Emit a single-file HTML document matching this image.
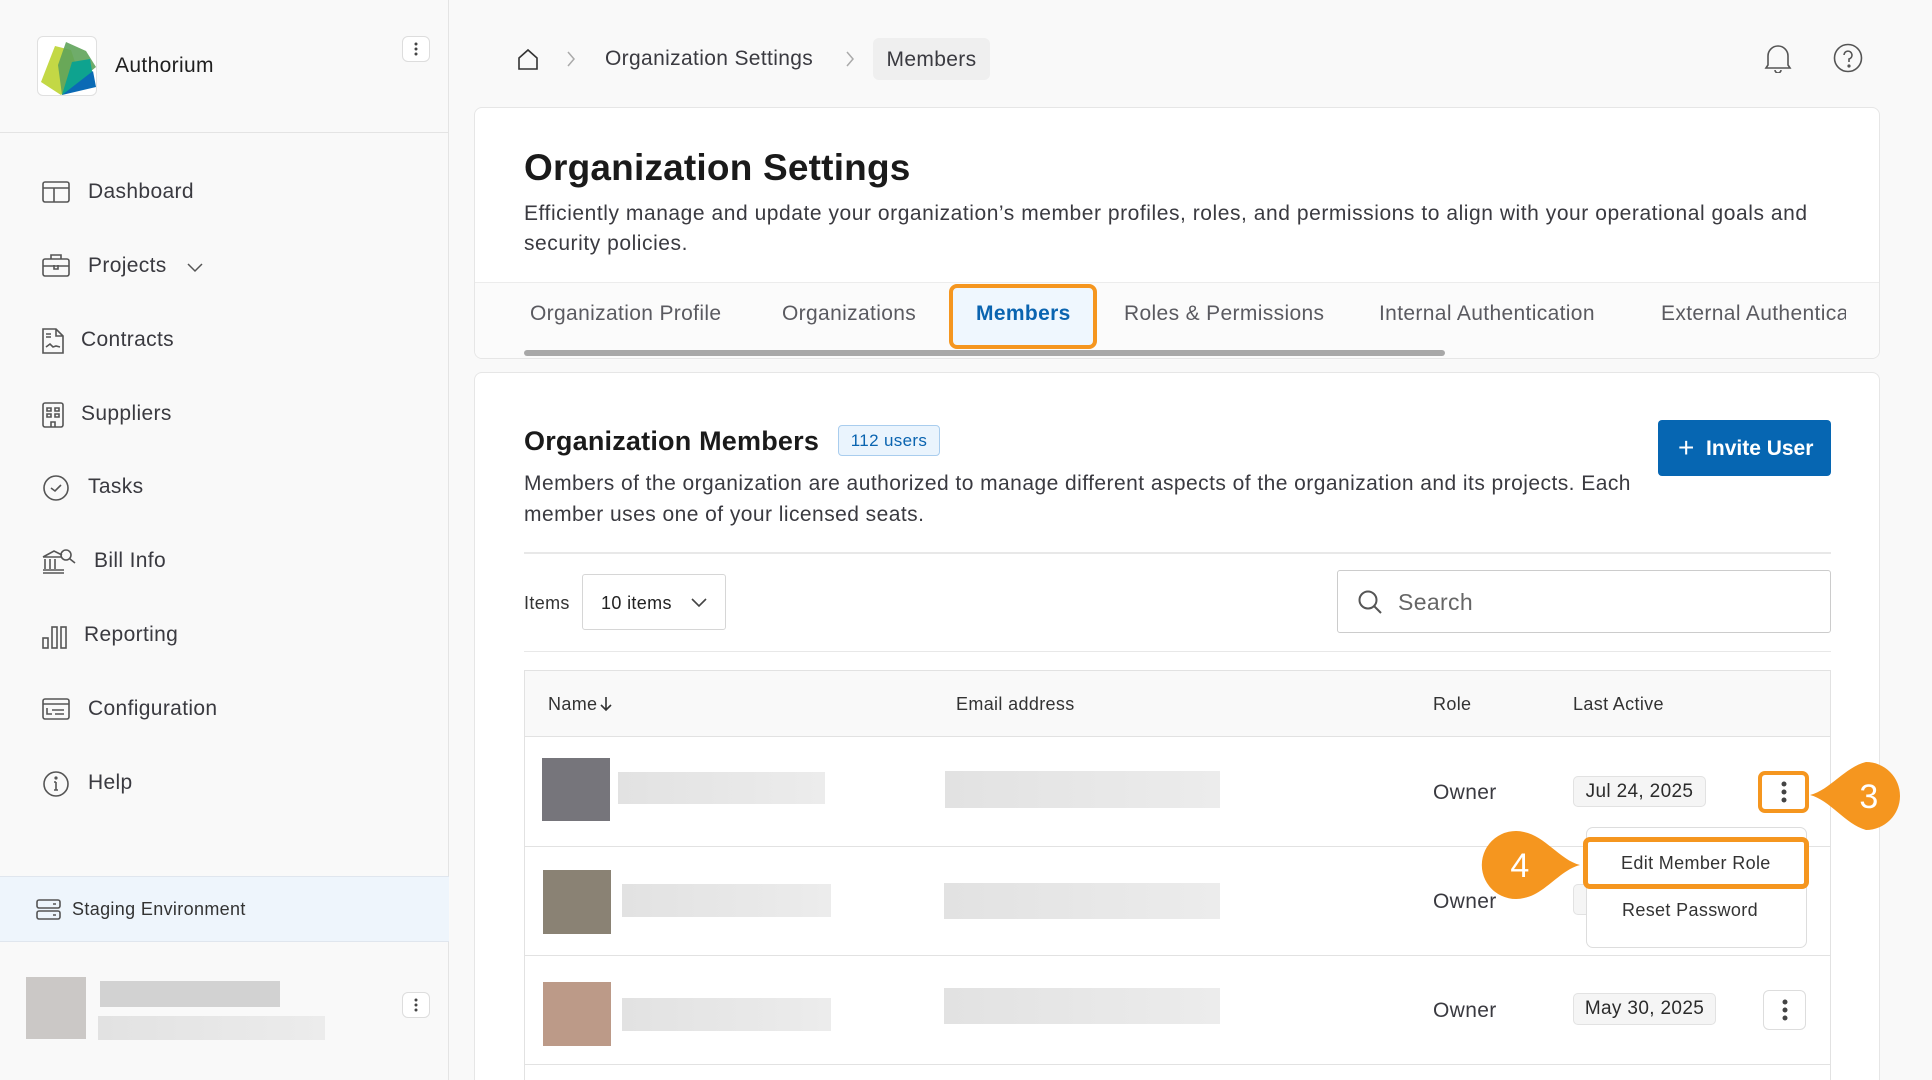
<!DOCTYPE html>
<html><head><meta charset="utf-8"><style>
*{box-sizing:border-box;margin:0;padding:0}
html{width:1932px;height:1080px;overflow:hidden}
body{width:1932px;height:1080px;overflow:hidden;background:#f9f9f9;font-family:"Liberation Sans",sans-serif;color:#2b2b2b;position:relative;letter-spacing:0.35px}
.abs{position:absolute}
.side{left:0;top:0;width:449px;height:1080px;background:#f9f9f9;border-right:1px solid #e4e4e4}
.nav{position:absolute;left:0;display:flex;align-items:center;font-size:21px;color:#3a3a40;height:40px;margin-top:-18px}
.nav svg{position:absolute;left:42px;top:8px}
.card{background:#fff;border:1px solid #e6e6e6;border-radius:8px}
.tab{position:absolute;top:302px;font-size:21px;color:#5a5a60}
.sk{position:absolute;background:linear-gradient(90deg,#e2e2e2,#ececec)}
.kb{position:absolute;border:1px solid #ddd;border-radius:6px;background:#fff}
.dots{position:absolute;left:50%;top:50%;transform:translate(-50%,-50%);width:5px}
.dots i{display:block;width:5px;height:5px;border-radius:50%;background:#444;margin:3px 0}
.pill{position:absolute;background:#f5f5f5;border:1px solid #e2e2e2;border-radius:5px;font-size:19px;color:#2b2b2b;display:flex;align-items:center;justify-content:center}
.owner{position:absolute;left:1433px;font-size:21px;color:#3a3a40}
</style></head><body>
<div class="abs side">
 <div class="abs" style="left:37px;top:36px;width:60px;height:60px;border:1px solid #e0e0e0;border-radius:6px;background:#fff;overflow:hidden">
  <svg width="60" height="60" viewBox="0 0 60 60"><path d="M17 9 L33 13 L42 40 L23 58 L3 45 Z" fill="#c3d845"/><path d="M28 5 L48 14 L58 30 L40 45 L24 58 L20 28 Z" fill="#5fa35a" opacity=".9"/><path d="M34 25 L52 22 L55 40 L24 58 Z" fill="#0ea38f"/><path d="M55 34 L58 50 L24 58 Z" fill="#0a6ab5"/></svg>
 </div>
 <div class="abs" style="left:115px;top:54px;font-size:21px;color:#1f1f1f">Authorium</div>
 <div class="kb" style="left:402px;top:36px;width:28px;height:26px"><div class="dots" style="width:3px"><i style="width:3px;height:3px;margin:2px 0"></i><i style="width:3px;height:3px;margin:2px 0"></i><i style="width:3px;height:3px;margin:2px 0"></i></div></div>
 <div class="abs" style="left:0;top:132px;width:449px;border-top:1px solid #e4e4e4"></div>
 <div class="nav" style="top:190px"><svg width="28" height="24" viewBox="0 0 28 24" fill="none" stroke="#555" stroke-width="1.6"><rect x="1" y="2" width="26" height="20" rx="2"/><path d="M1 8H27M12 8V22"/></svg><span style="margin-left:88px">Dashboard</span></div>
 <div class="nav" style="top:264px"><svg width="28" height="24" viewBox="0 0 28 24" fill="none" stroke="#555" stroke-width="1.6"><rect x="1" y="5" width="26" height="17" rx="2"/><path d="M9 5V1H19V5M1 12H27M12 11v4h4v-4"/></svg><span style="margin-left:88px">Projects</span><svg style="position:static;margin-left:20px;margin-top:4px" width="16" height="10" viewBox="0 0 16 10" fill="none" stroke="#555" stroke-width="1.5"><path d="M1 1l7 7 7-7"/></svg></div>
 <div class="nav" style="top:338px"><svg width="22" height="26" viewBox="0 0 22 26" fill="none" stroke="#555" stroke-width="1.6"><path d="M1 1H14L21 8V25H1Z M14 1V8H21 M4 6H9 M4 9H9 M4 19 L8 16 L11 19 L14 18 L18 19"/></svg><span style="margin-left:81px">Contracts</span></div>
 <div class="nav" style="top:412px"><svg width="22" height="26" viewBox="0 0 22 26" fill="none" stroke="#555" stroke-width="1.6"><rect x="1" y="1" width="20" height="24" rx="2"/><path d="M5 6h4v3H5zM13 6h4v3h-4zM5 12h4v3H5zM13 12h4v3h-4zM9 25v-5h4v5"/></svg><span style="margin-left:81px">Suppliers</span></div>
 <div class="nav" style="top:485px"><svg width="28" height="26" viewBox="0 0 28 26" fill="none" stroke="#555" stroke-width="1.6"><circle cx="14" cy="13" r="12"/><path d="M9 13l4 3 6-6"/></svg><span style="margin-left:88px">Tasks</span></div>
 <div class="nav" style="top:559px"><svg width="34" height="26" viewBox="0 0 34 26" fill="none" stroke="#555" stroke-width="1.6"><path d="M1 8L12 2L20 6M1 8H20M3 10v10M8 10v10M13 10v10M1 21H22M1 24H22"/><circle cx="24" cy="6" r="5"/><path d="M28 10l5 4"/></svg><span style="margin-left:94px">Bill Info</span></div>
 <div class="nav" style="top:633px"><svg width="26" height="26" viewBox="0 0 26 26" fill="none" stroke="#555" stroke-width="1.6"><rect x="1" y="15" width="5" height="10"/><rect x="10" y="4" width="5" height="21"/><rect x="19" y="4" width="5" height="21"/></svg><span style="margin-left:84px">Reporting</span></div>
 <div class="nav" style="top:707px"><svg width="28" height="24" viewBox="0 0 28 24" fill="none" stroke="#555" stroke-width="1.6"><rect x="1" y="2" width="26" height="20" rx="2"/><path d="M1 7H27M5 11v6h5M10 13h12M13 17h9"/></svg><span style="margin-left:88px">Configuration</span></div>
 <div class="nav" style="top:781px"><svg width="28" height="26" viewBox="0 0 28 26" fill="none" stroke="#555" stroke-width="1.6"><circle cx="14" cy="13" r="12"/><path d="M14 11v8M12 19h4M12 11h2"/><circle cx="14" cy="7" r=".8" fill="#555"/></svg><span style="margin-left:88px">Help</span></div>
 <div class="abs" style="left:0;top:876px;width:449px;height:66px;background:#eef5fc;border-top:1px solid #e0e6ee;border-bottom:1px solid #e0e6ee">
  <svg class="abs" style="left:36px;top:22px" width="25" height="22" viewBox="0 0 25 22" fill="none" stroke="#555" stroke-width="1.6"><rect x="1" y="1" width="23" height="8" rx="2"/><rect x="1" y="12" width="23" height="8" rx="2"/><path d="M17 5h3M17 16h3"/></svg>
  <div class="abs" style="left:72px;top:22px;font-size:18px;color:#333">Staging Environment</div>
 </div>
 <div class="abs" style="left:26px;top:977px;width:60px;height:62px;background:#cbc8c6"></div>
 <div class="sk" style="left:100px;top:981px;width:180px;height:26px;background:#d2d2d2"></div>
 <div class="sk" style="left:98px;top:1016px;width:227px;height:24px"></div>
 <div class="kb" style="left:402px;top:992px;width:28px;height:26px"><div class="dots" style="width:3px"><i style="width:3px;height:3px;margin:2px 0"></i><i style="width:3px;height:3px;margin:2px 0"></i><i style="width:3px;height:3px;margin:2px 0"></i></div></div>
</div>

<svg class="abs" style="left:516px;top:47px" width="24" height="24" viewBox="0 0 24 24" fill="none" stroke="#333" stroke-width="1.6"><path d="M3 11L12 3L21 11V22H3Z"/></svg>
<svg class="abs" style="left:566px;top:51px" width="10" height="16" viewBox="0 0 10 16" fill="none" stroke="#aaa" stroke-width="1.5"><path d="M2 1l6 7-6 7"/></svg>
<div class="abs" style="left:605px;top:47px;font-size:21px;color:#3a3a40">Organization Settings</div>
<svg class="abs" style="left:845px;top:51px" width="10" height="16" viewBox="0 0 10 16" fill="none" stroke="#aaa" stroke-width="1.5"><path d="M2 1l6 7-6 7"/></svg>
<div class="abs" style="left:873px;top:38px;width:117px;height:42px;background:#efefef;border-radius:6px;font-size:21px;color:#3a3a40;text-align:center;line-height:44px">Members</div>
<svg class="abs" style="left:1764px;top:43px" width="28" height="30" viewBox="0 0 28 30" fill="none" stroke="#555" stroke-width="1.6"><path d="M4 22V13a10 10 0 0 1 20 0v9l2 3H2Z M11 27a3 3 0 0 0 6 0"/></svg>
<svg class="abs" style="left:1833px;top:43px" width="30" height="30" viewBox="0 0 30 30" fill="none" stroke="#555" stroke-width="1.6"><circle cx="15" cy="15" r="13.5"/><path d="M11 12a4 4 0 1 1 5 4v3"/><circle cx="16" cy="23" r=".8" fill="#555"/></svg>

<div class="abs card" style="left:474px;top:107px;width:1406px;height:252px;overflow:hidden">
 <div class="abs" style="left:49px;top:39px;font-size:37px;font-weight:bold;color:#1a1a1a;letter-spacing:0.2px">Organization Settings</div>
 <div class="abs" style="left:49px;top:91px;width:1320px;font-size:21px;line-height:30px;color:#3a3a40;letter-spacing:0.55px">Efficiently manage and update your organization’s member profiles, roles, and permissions to align with your operational goals and security policies.</div>
 <div class="abs" style="left:0;top:174px;width:1406px;height:80px;background:#fbfbfb;border-top:1px solid #ececec"></div>
</div>
<div class="tab" style="left:530px">Organization Profile</div>
<div class="tab" style="left:782px">Organizations</div>
<div class="abs" style="left:949px;top:284px;width:148px;height:65px;border:4px solid #f5961f;border-radius:8px;background:#eff7fe"></div>
<div class="tab" style="left:976px;color:#0a64b0;font-weight:bold">Members</div>
<div class="tab" style="left:1124px">Roles &amp; Permissions</div>
<div class="tab" style="left:1379px">Internal Authentication</div>
<div class="tab" style="left:1661px;width:185px;overflow:hidden;white-space:nowrap">External Authentication</div>
<div class="abs" style="left:524px;top:350px;width:921px;height:6px;border-radius:3px;background:#a8a8a8"></div>

<div class="abs card" style="left:474px;top:372px;width:1406px;height:708px;border-bottom:none;border-radius:8px 8px 0 0"></div>
<div class="abs" style="left:524px;top:426px;font-size:27px;font-weight:bold;color:#1a1a1a;letter-spacing:0.2px">Organization Members</div>
<div class="abs" style="left:838px;top:425px;width:102px;height:31px;background:#eaf4fd;border:1px solid #a9cdee;border-radius:4px;color:#0a64b0;font-size:17px;text-align:center;line-height:29px">112 users</div>
<div class="abs" style="left:1658px;top:420px;width:173px;height:56px;background:#0666b2;border-radius:4px;color:#fff;font-size:21px;font-weight:bold;line-height:56px;padding-left:20px;letter-spacing:0"><span style="font-weight:normal;font-size:28px;vertical-align:-2px">+</span>&nbsp; Invite User</div>
<div class="abs" style="left:524px;top:468px;width:1120px;font-size:21px;line-height:31px;color:#3a3a40;letter-spacing:0.45px">Members of the organization are authorized to manage different aspects of the organization and its projects. Each member uses one of your licensed seats.</div>
<div class="abs" style="left:524px;top:552px;width:1307px;border-top:2px solid #e8e8e8"></div>
<div class="abs" style="left:524px;top:593px;font-size:18px;color:#333">Items</div>
<div class="abs" style="left:582px;top:574px;width:144px;height:56px;border:1px solid #d6d6d6;border-radius:3px;font-size:18px;line-height:56px;padding-left:18px;color:#222">10 items<svg style="position:absolute;right:18px;top:23px" width="16" height="10" viewBox="0 0 16 10" fill="none" stroke="#444" stroke-width="1.6"><path d="M1 1l7 7 7-7"/></svg></div>
<div class="abs" style="left:1337px;top:570px;width:494px;height:63px;border:1px solid #ccc;border-radius:3px"></div>
<svg class="abs" style="left:1357px;top:589px" width="26" height="26" viewBox="0 0 26 26" fill="none" stroke="#555" stroke-width="2"><circle cx="11" cy="11" r="8.5"/><path d="M17 17l7 7"/></svg>
<div class="abs" style="left:1398px;top:589px;font-size:23px;color:#666">Search</div>
<div class="abs" style="left:524px;top:651px;width:1307px;border-top:1px solid #e8e8e8"></div>

<div class="abs" style="left:524px;top:670px;width:1307px;height:410px;border:1px solid #e2e2e2;border-bottom:none;background:#fff"></div>
<div class="abs" style="left:525px;top:671px;width:1305px;height:66px;background:#f9f9f9;border-bottom:1px solid #e2e2e2"></div>
<div class="abs" style="left:548px;top:694px;font-size:18px;color:#333">Name<svg style="margin-left:3px;vertical-align:-2px" width="12" height="16" viewBox="0 0 12 16" fill="none" stroke="#333" stroke-width="1.6"><path d="M6 1v13M1 9l5 5 5-5"/></svg></div>
<div class="abs" style="left:956px;top:694px;font-size:18px;color:#333">Email address</div>
<div class="abs" style="left:1433px;top:694px;font-size:18px;color:#333">Role</div>
<div class="abs" style="left:1573px;top:694px;font-size:18px;color:#333">Last Active</div>
<div class="abs" style="left:525px;top:846px;width:1305px;border-top:1px solid #e2e2e2"></div>
<div class="abs" style="left:525px;top:955px;width:1305px;border-top:1px solid #e2e2e2"></div>
<div class="abs" style="left:525px;top:1064px;width:1305px;border-top:1px solid #e2e2e2"></div>

<div class="abs" style="left:542px;top:758px;width:68px;height:63px;background:#76757b"></div>
<div class="sk" style="left:618px;top:772px;width:207px;height:32px"></div>
<div class="sk" style="left:945px;top:771px;width:275px;height:37px"></div>
<div class="owner" style="top:781px">Owner</div>
<div class="pill" style="left:1573px;top:776px;width:133px;height:31px">Jul 24, 2025</div>
<div class="kb" style="left:1758px;top:771px;width:51px;height:42px;border:4px solid #f5961f;border-radius:7px"><div class="dots"><i></i><i></i><i></i></div></div>
<svg class="abs" style="left:1810px;top:752px" width="100" height="90" viewBox="0 0 100 90"><path d="M0 43 C20 38 35 15 56 10 A34 34 0 1 1 56 78 C35 72 20 48 0 43Z" fill="#f5961f"/><text x="59" y="56" font-family="Liberation Sans" font-size="34" fill="#fff" text-anchor="middle">3</text></svg>

<div class="abs" style="left:543px;top:870px;width:68px;height:64px;background:#8a8274"></div>
<div class="sk" style="left:622px;top:884px;width:209px;height:33px"></div>
<div class="sk" style="left:944px;top:883px;width:276px;height:36px"></div>
<div class="owner" style="top:890px">Owner</div>
<div class="pill" style="left:1573px;top:884px;width:40px;height:31px"></div>

<div class="abs" style="left:1586px;top:827px;width:221px;height:121px;background:#fff;border:1px solid #ddd;border-radius:7px"></div>
<div class="abs" style="left:1583px;top:837px;width:226px;height:52px;border:5px solid #f5961f;border-radius:7px;background:#fff;font-size:18px;color:#333;line-height:42px;padding-left:33px">Edit Member Role</div>
<div class="abs" style="left:1622px;top:900px;font-size:18px;color:#333">Reset Password</div>
<svg class="abs" style="left:1480px;top:820px" width="100" height="90" viewBox="0 0 100 90"><path d="M100 45 C80 40 65 16 44 12 A34 34 0 1 0 44 78 C65 74 80 50 100 45Z" fill="#f5961f"/><text x="40" y="57" font-family="Liberation Sans" font-size="34" fill="#fff" text-anchor="middle">4</text></svg>

<div class="abs" style="left:543px;top:982px;width:68px;height:64px;background:#bc9a88"></div>
<div class="sk" style="left:622px;top:998px;width:209px;height:33px"></div>
<div class="sk" style="left:944px;top:988px;width:276px;height:36px"></div>
<div class="owner" style="top:999px">Owner</div>
<div class="pill" style="left:1573px;top:993px;width:143px;height:32px">May 30, 2025</div>
<div class="kb" style="left:1763px;top:990px;width:43px;height:40px"><div class="dots"><i></i><i></i><i></i></div></div>
</body></html>
